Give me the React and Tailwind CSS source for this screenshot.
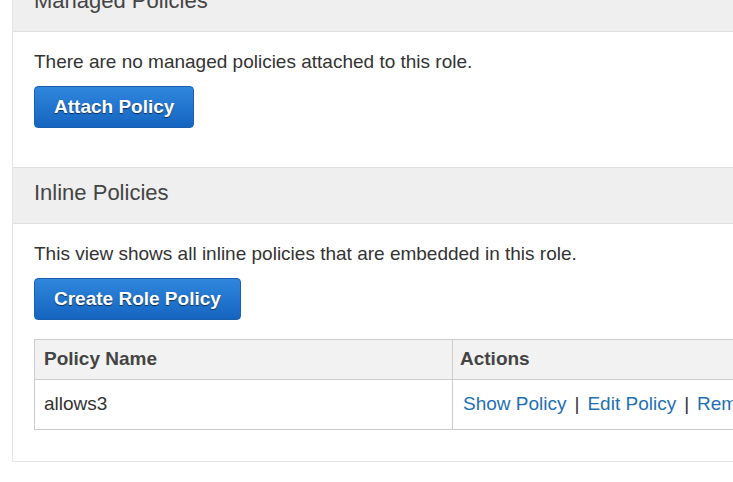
export default function App() {
  const font = { fontFamily: '"Liberation Sans", Arial, sans-serif' };
  const btn =
    "inline-block rounded-[4px] border border-[#1a5fae] bg-gradient-to-b from-[#2f86dc] to-[#1565c0] px-[19px] h-[42px] text-[19px] font-bold text-white [text-shadow:0_1px_1px_rgba(0,0,0,0.6)]";
  const head =
    "h-[57px] bg-[#efefef] border-y border-[#e0e0e0] pl-[21px] pt-[13px] text-[22px] leading-[24px] text-[#444]";
  return (
    <div className="w-[733px] h-[482px] overflow-hidden bg-white" style={font}>
      <div className="ml-[12px] -mt-[25px] w-[900px] border-l border-b border-[#e6e6e6]">
        {/* Managed */}
        <div className={head}>Managed Policies</div>
        <div className="pl-[21px] pt-[19px] h-[135px]">
          <p className="text-[19px] leading-[22px] text-[#333]">There are no managed policies attached to this role.</p>
          <button className={btn + " mt-[13px]"}>Attach Policy</button>
        </div>
        {/* Inline */}
        <div className={head}>Inline Policies</div>
        <div className="pl-[21px] pt-[19px] pb-[31px] pr-[20px]">
          <p className="text-[19px] leading-[22px] text-[#333]">This view shows all inline policies that are embedded in this role.</p>
          <button className={btn + " mt-[13px]"}>Create Role Policy</button>
          <table className="mt-[19px] w-full border-collapse border border-[#cccccc] text-[19px] text-[#333]">
            <thead>
              <tr className="bg-[#f2f2f2] h-[40px]">
                <th className="w-[418px] border border-[#cccccc] text-left font-bold pl-[9px] text-[#444]">Policy Name</th>
                <th className="border border-[#cccccc] text-left font-bold pl-[7px] text-[#444]">Actions</th>
              </tr>
            </thead>
            <tbody>
              <tr className="h-[50px]">
                <td className="border border-[#cccccc] pl-[9px]">allows3</td>
                <td className="border border-[#cccccc] pl-[10px] whitespace-nowrap">
                  <a className="text-[#1f6fb5]">Show Policy</a>
                  <span className="mx-[8px] text-[#333]">|</span>
                  <a className="text-[#1f6fb5]">Edit Policy</a>
                  <span className="mx-[8px] text-[#333]">|</span>
                  <a className="text-[#1f6fb5]">Remove Policy</a>
                </td>
              </tr>
            </tbody>
          </table>
        </div>
      </div>
    </div>
  );
}
